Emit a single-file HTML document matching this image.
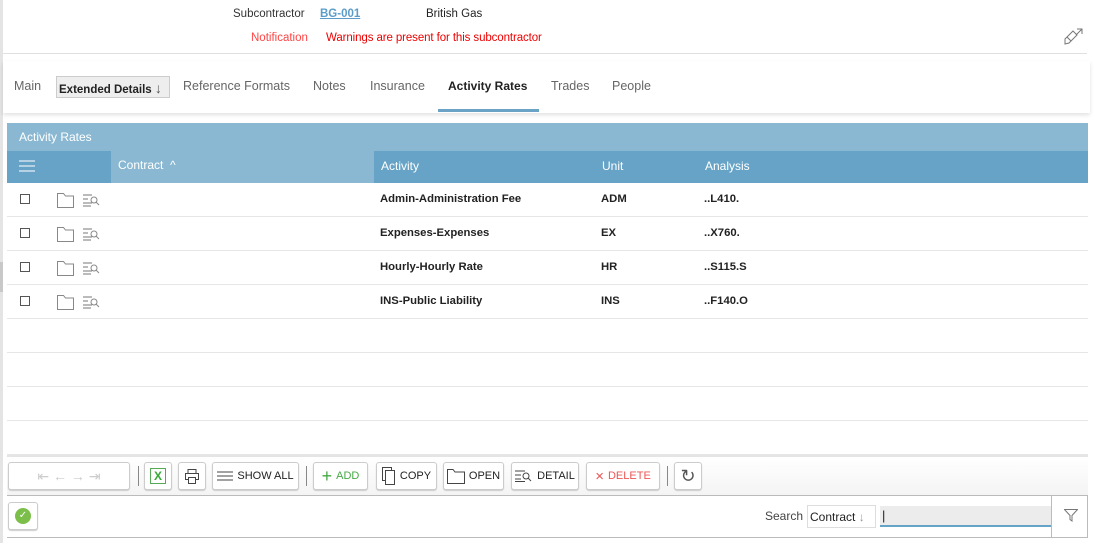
<!DOCTYPE html><html><head><style>
*{box-sizing:border-box;margin:0;padding:0}
body{width:1095px;height:543px;background:#fff;font-family:"Liberation Sans",sans-serif;font-size:12px;color:#222;position:relative;overflow:hidden}
.a{position:absolute}
.tab{position:absolute;top:79px;font-size:12.5px;color:#666}
.hd{position:absolute;top:159px;color:#fff;font-size:12px}
.row{position:absolute;left:7px;width:1081px;height:34px;border-bottom:1px solid #e6e6e6}
.row span{position:absolute;top:10px;font-weight:bold;font-size:11.3px;color:#222}
.cb{position:absolute;left:13px;top:11px;width:10px;height:10px;border:1px solid #555}
.btn{position:absolute;top:462px;height:28px;border:1px solid #ccc;border-radius:3px;background:#fff;box-shadow:0 1px 1px #ccc;font-size:11px;color:#222;display:flex;align-items:center;justify-content:center;gap:4px}
.sep{position:absolute;top:466px;width:1px;height:20px;background:#888}
</style></head><body>
<div class="a" style="left:0;top:0;width:3px;height:543px;background:#e4e4e4"></div>
<div class="a" style="left:0;top:262px;width:3px;height:30px;background:#c8c8c8"></div>
<div class="a" style="left:233px;top:8px;font-size:11.5px;color:#333">Subcontractor</div>
<div class="a" style="left:320px;top:8px;font-size:11.5px;font-weight:bold;color:#5b9cc8;text-decoration:underline">BG-001</div>
<div class="a" style="left:426px;top:8px;font-size:11.5px;color:#222">British Gas</div>
<div class="a" style="left:251px;top:32px;font-size:11.5px;color:#f44">Notification</div>
<div class="a" style="left:326px;top:32px;font-size:11.5px;color:#e00;letter-spacing:-0.1px">Warnings are present for this subcontractor</div>
<svg class="a" style="left:1062px;top:28px" width="22" height="20" viewBox="0 0 22 20" fill="none" stroke="#777" stroke-width="1"><path d="M3 11 L11 3 L15 7 L7 15 L3 16 Z M5 9 L9 13"/><path d="M15 1 H20 V6 M20 1 L14 7"/></svg>
<div class="a" style="left:3px;top:53px;width:1084px;height:1px;background:#e0e0e0"></div>
<div class="a" style="left:3px;top:61px;width:1087px;height:52px;background:#fff;box-shadow:0 2px 4px rgba(0,0,0,.12)"></div>
<div class="tab" style="left:14px">Main</div>
<div class="a" style="left:56px;top:76px;width:114px;height:22px;background:#eee;border:1px solid #ccc"></div>
<div class="tab" style="left:59px;color:#222;font-weight:bold;font-size:11.5px;top:80px">Extended Details <span style="font-weight:normal;font-size:14px;color:#555">↓</span></div>
<div class="tab" style="left:183px">Reference Formats</div>
<div class="tab" style="left:313px">Notes</div>
<div class="tab" style="left:370px">Insurance</div>
<div class="tab" style="left:448px;color:#222;font-weight:bold;font-size:12px">Activity Rates</div>
<div class="tab" style="left:551px">Trades</div>
<div class="tab" style="left:612px">People</div>
<div class="a" style="left:438px;top:109px;width:101px;height:3px;background:#6aa3c6"></div>
<div class="a" style="left:7px;top:123px;width:1081px;height:28px;background:#8ab8d2"></div>
<div class="a" style="left:19px;top:130px;color:#fff;font-size:12px">Activity Rates</div>
<div class="a" style="left:7px;top:151px;width:1081px;height:32px;background:#66a3c7"></div>
<div class="a" style="left:111px;top:151px;width:263px;height:32px;background:#8ab8d2"></div>
<svg class="a" style="left:18px;top:159px" width="18" height="14" stroke="#cfe2ee" stroke-width="1.5"><path d="M1 2H17M1 7H17M1 12H17"/></svg>
<div class="hd" style="left:118px;top:158px">Contract &nbsp;^</div>
<div class="hd" style="left:381px">Activity</div>
<div class="hd" style="left:602px">Unit</div>
<div class="hd" style="left:705px">Analysis</div>
<div id="rows"></div>
<script>
var d=[["Admin-Administration Fee","ADM","..L410."],["Expenses-Expenses","EX","..X760."],["Hourly-Hourly Rate","HR","..S115.S"],["INS-Public Liability","INS","..F140.O"],["","",""],["","",""],["","",""],["","",""]];
var h="";d.forEach(function(r,i){var t=183+i*34;h+='<div class="row" style="top:'+t+'px">';if(r[0]){h+='<div class="cb"></div><svg class="a" style="left:49px;top:8px" width="50" height="18" fill="none" stroke="#888"><path d="M1.5 2.5H7.5L9.5 5H17.5V16.5H1.5Z"/><path d="M27 4H36M27 8H32M27 12H36M27 15H35" stroke="#777"/><circle cx="38" cy="9" r="3"/><path d="M40 11L43 14"/></svg><span style="left:373px">'+r[0]+'</span><span style="left:594px">'+r[1]+'</span><span style="left:697px">'+r[2]+'</span>';}h+='</div>';});
document.getElementById('rows').innerHTML=h;
</script>
<div class="a" style="left:7px;top:455px;width:1081px;height:2px;background:#e4e4e4"></div>
<div class="a" style="left:7px;top:457px;width:1081px;height:38px;background:linear-gradient(#fff,#f4f4f4)"></div>
<div class="btn" style="left:8px;width:122px;color:#ccc;font-size:14px;justify-content:space-around">⇤ ← → ⇥</div>
<div class="sep" style="left:138px"></div>
<div class="btn" style="left:144px;width:28px"><span style="border:1px solid #5a5;color:#3a3;font-weight:bold;padding:0 3px;font-size:12px">X</span></div>
<div class="btn" style="left:178px;width:28px"><svg width="16" height="16" fill="none" stroke="#444"><rect x="4" y="1.5" width="8" height="4"/><rect x="1.5" y="5.5" width="13" height="6"/><rect x="4.5" y="9.5" width="7" height="6" fill="#fff"/></svg></div>
<div class="btn" style="left:212px;width:87px"><svg width="16" height="10" stroke="#444"><path d="M0 1H16M0 5H16M0 9H16"/></svg>SHOW ALL</div>
<div class="sep" style="left:306px"></div>
<div class="btn" style="left:313px;width:55px;color:#4a4"><span style="font-size:18px;font-weight:300">+</span>ADD</div>
<div class="btn" style="left:376px;width:61px"><svg width="14" height="18" fill="none" stroke="#444"><rect x="0.5" y="0.5" width="9" height="13"/><rect x="3.5" y="3.5" width="9" height="14" fill="#fff"/></svg>COPY</div>
<div class="btn" style="left:443px;width:61px"><svg width="18" height="15" fill="none" stroke="#444"><path d="M0.5 0.5H6L8 3H17.5V14.5H0.5Z"/></svg>OPEN</div>
<div class="btn" style="left:511px;width:68px"><svg width="18" height="12" fill="none" stroke="#444"><path d="M0 1H10M0 5H6M0 9H6M0 11.5H10"/><circle cx="11" cy="6" r="3"/><path d="M13 8L16 11"/></svg>DETAIL</div>
<div class="btn" style="left:586px;width:74px;color:#e55"><span style="font-size:15px;font-weight:300">×</span>DELETE</div>
<div class="sep" style="left:667px"></div>
<div class="btn" style="left:674px;width:28px;font-size:18px;color:#555">↻</div>
<div class="a" style="left:7px;top:495px;width:1081px;height:43px;border:1px solid #bbb;border-left:none;border-right:1px solid #bbb;background:#fff"></div>
<div class="a" style="left:1051px;top:495px;width:1px;height:43px;background:#bbb"></div>
<div class="btn" style="left:8px;top:502px;width:30px;height:28px"><div style="width:16px;height:16px;border-radius:50%;background:#7bbf4a;color:#fff;font-size:10px;text-align:center;line-height:16px">✓</div></div>
<div class="a" style="left:765px;top:509px;color:#444;font-size:12px">Search</div>
<div class="a" style="left:807px;top:505px;width:69px;height:23px;border:1px solid #ddd;font-size:12px;padding:4px 2px;color:#222">Contract <span style="color:#999">↓</span></div>
<div class="a" style="left:880px;top:506px;width:171px;height:21px;background:#ececec;border-bottom:2px solid #66a3c7;padding:2px 2px;font-size:13px">|</div>
<svg class="a" style="left:1064px;top:509px" width="14" height="13" fill="none" stroke="#777"><path d="M0.5 0.5H13.5L8 6.5V12L6 10.5V6.5Z"/></svg>
</body></html>
